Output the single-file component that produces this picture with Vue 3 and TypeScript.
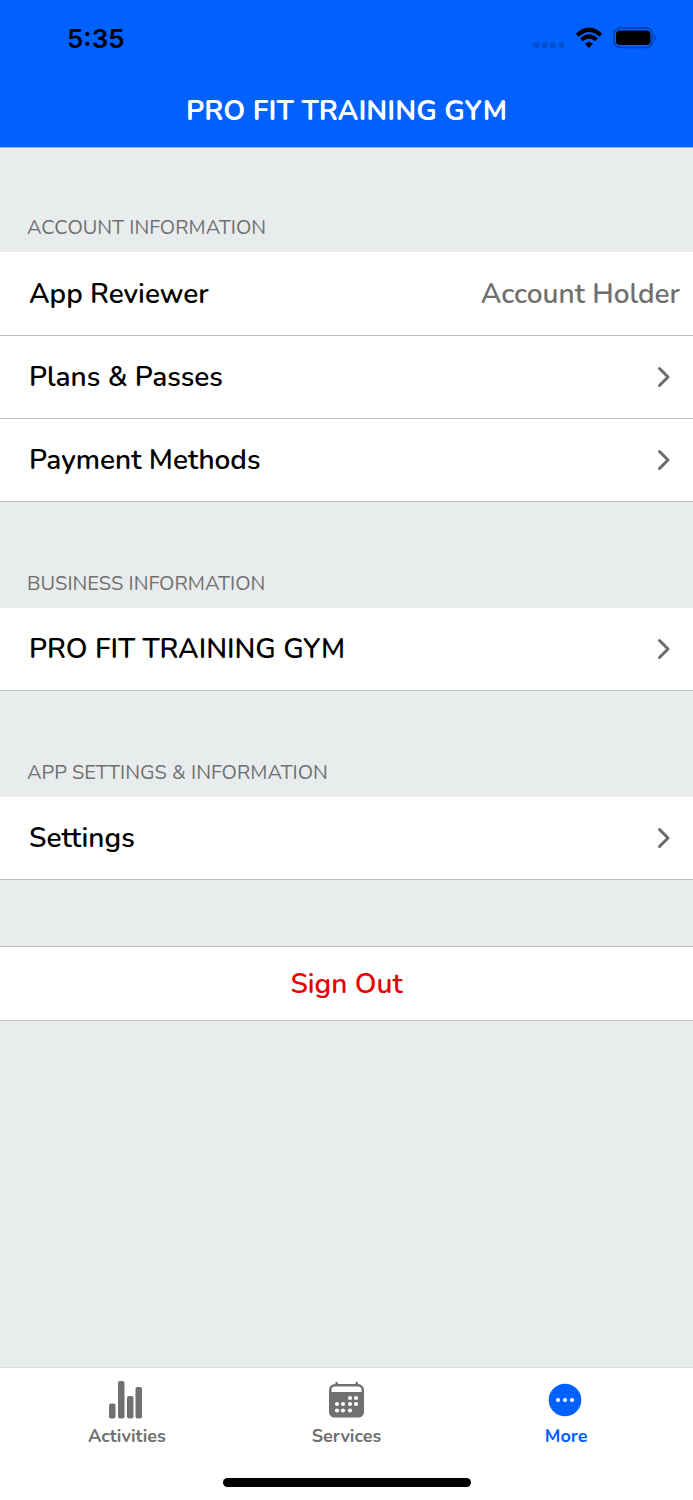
<script setup lang="ts">
import { ref } from 'vue'

interface Row {
  label: string
  detail?: string
}

interface Group {
  title: string
  rows: Row[]
}

const groups: Group[] = [
  {
    title: 'ACCOUNT INFORMATION',
    rows: [
      { label: 'App Reviewer', detail: 'Account Holder' },
      { label: 'Plans & Passes' },
      { label: 'Payment Methods' },
    ],
  },
  { title: 'BUSINESS INFORMATION', rows: [{ label: 'PRO FIT TRAINING GYM' }] },
  { title: 'APP SETTINGS & INFORMATION', rows: [{ label: 'Settings' }] },
]

const tabs = ['Activities', 'Services', 'More']
const activeTab = ref('More')

const calendarDots: [number, number][] = [
  [21, 16], [27, 16],
  [8, 22], [14, 22], [21, 22], [27, 22],
  [8, 28.5], [14, 28.5], [21, 28.5],
]
</script>

<template>
  <div class="app">
    <header class="header">
      <div class="status">
        <span class="time">5:35</span>
        <div class="indicators">
          <svg class="signal" width="32" height="22" viewBox="0 0 32 22" aria-hidden="true">
            <circle cx="3.5" cy="18" r="3" />
            <circle cx="11.7" cy="18" r="3" />
            <circle cx="20" cy="18" r="3" />
            <circle cx="28.5" cy="18" r="3" />
          </svg>
          <svg class="wifi" width="28" height="22" viewBox="0 0 28 22" aria-hidden="true">
            <path d="M2.2 8.3Q14-2.8 25.8 8.3" fill="none" stroke="#000" stroke-width="4.2" />
            <path d="M6.6 12.7Q14 6 21.4 12.7" fill="none" stroke="#000" stroke-width="4" />
            <path d="M10 17Q14 13.2 18 17L14 21Z" />
          </svg>
          <svg width="44" height="22" viewBox="0 0 44 22" aria-hidden="true">
            <rect x="1" y="1" width="38.5" height="19.5" rx="6" fill="none" stroke="#003fa6" stroke-width="1.6" />
            <rect x="3" y="3.5" width="34.5" height="14.5" rx="4" />
            <path d="M41.5 7.5q2 1 2 3t-2 3z" fill="#003fa6" />
          </svg>
        </div>
      </div>
      <h1 class="title">PRO FIT TRAINING GYM</h1>
    </header>

    <main class="content">
      <section v-for="group in groups" :key="group.title">
        <h2 class="group-title">{{ group.title }}</h2>
        <template v-for="row in group.rows" :key="row.label">
          <div v-if="row.detail" class="row row-static">
            <span>{{ row.label }}</span>
            <span class="detail">{{ row.detail }}</span>
          </div>
          <button v-else type="button" class="row">
            <span>{{ row.label }}</span>
            <svg class="chevron" width="16" height="22" viewBox="0 0 16 22" aria-hidden="true">
              <path d="M3.5 2.5l8.500 8.500-8.500 8.500" />
            </svg>
          </button>
        </template>
      </section>
      <button type="button" class="sign-out">Sign Out</button>
    </main>

    <footer class="footer">
      <nav class="tabs">
        <button
          v-for="tab in tabs"
          :key="tab"
          type="button"
          class="tab"
          :class="{ active: tab === activeTab }"
          @click="activeTab = tab"
        >
          <svg v-if="tab === 'Activities'" width="36" height="40" viewBox="0 0 36 40" aria-hidden="true">
            <rect x="0" y="24.5" width="6.5" height="15" rx="2" />
            <rect x="9" y="2" width="6.5" height="37.5" rx="2" />
            <rect x="18" y="17" width="6.5" height="22.5" rx="2" />
            <rect x="26.5" y="8" width="6.5" height="31.5" rx="2" />
          </svg>
          <svg v-else-if="tab === 'Services'" width="36" height="40" viewBox="0 0 36 40" aria-hidden="true">
            <g transform="translate(0 3)">
              <path d="M6.4 2V1a1.2 1.2 0 0 1 2.4 0v1h17.8V1a1.2 1.2 0 0 1 2.4 0v1A6 6 0 0 1 35 8v22a5.5 5.5 0 0 1-5.5 5.5h-24A5.5 5.5 0 0 1 0 30V8a6 6 0 0 1 6.4-6z" />
              <path d="M2.5 10V7.5A3.5 3.5 0 0 1 6 4.5h23A3.5 3.5 0 0 1 32.5 7.5V10z" fill="#fff" />
              <circle v-for="[x, y] in calendarDots" :key="`${x}-${y}`" :cx="x" :cy="y" r="2.1" fill="#fff" />
            </g>
          </svg>
          <svg v-else width="36" height="40" viewBox="0 0 36 40" aria-hidden="true">
            <circle cx="17" cy="21" r="16.3" />
            <circle cx="10" cy="21" r="2.1" fill="#fff" />
            <circle cx="17" cy="21" r="2.1" fill="#fff" />
            <circle cx="24" cy="21" r="2.1" fill="#fff" />
          </svg>
          <span>{{ tab }}</span>
        </button>
      </nav>
      <div class="home-bar"></div>
    </footer>
  </div>
</template>

<style>
body {
  margin: 0;
}
</style>

<style scoped>
.app {
  display: flex;
  flex-direction: column;
  min-height: 100vh;
  background: #e8eced;
  color: #000;
  font-family: Nunito, Lato, "Open Sans", sans-serif;
  font-size: 28px;
  font-weight: 600;
}

button {
  margin: 0;
  border: 0;
  font: inherit;
  color: inherit;
  cursor: pointer;
}

.header {
  box-sizing: border-box;
  height: 148px;
  background: #0061ff;
  border-bottom: 1px solid #8db7fa;
}

.status {
  display: flex;
  align-items: center;
  justify-content: space-between;
  height: 76px;
  padding: 0 36px 0 67px;
}

.time {
  font-family: Inter, sans-serif;
  font-size: 26px;
  font-weight: 600;
}

.indicators {
  display: flex;
  align-items: center;
  gap: 10px;
}

.signal {
  fill: #004fcf;
}

.title {
  margin: 0;
  color: #fff;
  font-size: 28px;
  font-weight: 700;
  line-height: 70px;
  text-align: center;
}

.content {
  display: flex;
  flex: 1;
  flex-direction: column;
  gap: 2px;
}

.group-title {
  box-sizing: border-box;
  height: 104px;
  margin: 0;
  padding: 66px 27px 0;
  color: #707070;
  font-size: 20px;
  font-weight: 400;
  line-height: 28px;
}

.row {
  display: flex;
  align-items: center;
  justify-content: space-between;
  box-sizing: border-box;
  width: 100%;
  min-height: 83px;
  padding: 0 13px 0 29px;
  background: #fff;
  border-bottom: 1px solid #bfc1c2;
  text-align: left;
}

.row-static {
  min-height: 84px;
}

.detail {
  color: #707070;
}

.chevron {
  margin-right: 8px;
  fill: none;
  stroke: #6c6c6c;
  stroke-width: 3;
  stroke-linecap: round;
  stroke-linejoin: round;
}

.sign-out {
  box-sizing: border-box;
  width: 100%;
  height: 75px;
  margin-top: 64px;
  background: #fff;
  border-top: 1px solid #bfc1c2;
  border-bottom: 1px solid #bfc1c2;
  color: #e60000;
  text-align: center;
}

.footer {
  background: #fff;
  border-top: 1px solid #dedfe0;
}

.tabs {
  display: flex;
  padding: 0 17px;
}

.tab {
  display: flex;
  flex: 1;
  flex-direction: column;
  align-items: center;
  gap: 4px;
  padding: 11px 0 0;
  background: none;
  color: #707070;
  fill: currentColor;
  font-size: 18px;
  font-weight: 700;
  line-height: 26px;
}

.tab.active {
  color: #0061ff;
}

.home-bar {
  width: 248px;
  height: 9px;
  margin: 29px auto 13px;
  border-radius: 5px;
  background: #000;
}
</style>
